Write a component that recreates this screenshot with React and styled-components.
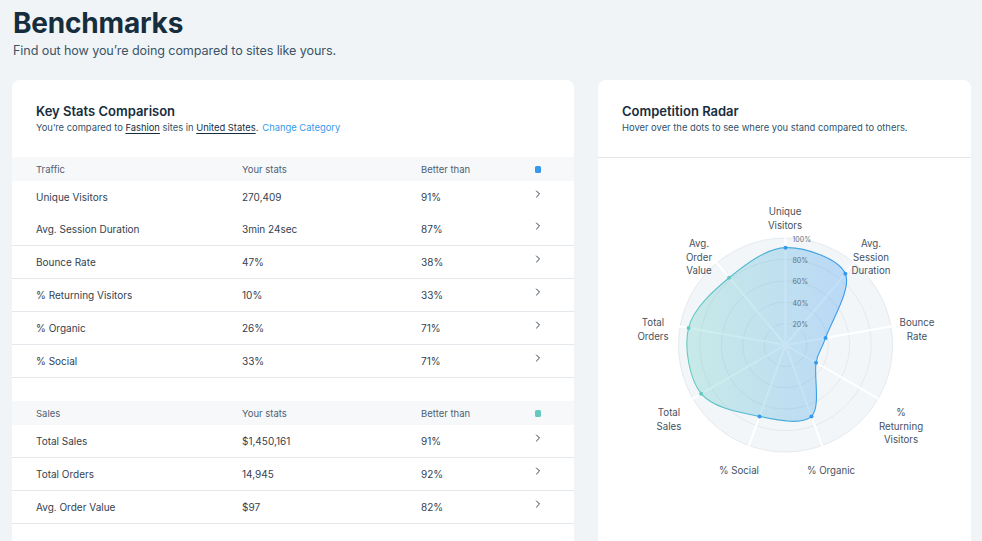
import React from 'react';
import styled, { createGlobalStyle } from 'styled-components';

const GlobalStyle = createGlobalStyle`
  html, body {
    margin: 0;
    padding: 0;
    background: #f0f4f7;
    overflow: hidden;
  }
  * {
    box-sizing: border-box;
  }
  body {
    font-family: Inter, "Noto Sans", sans-serif;
    color: #162d3d;
  }
`;

const TRAFFIC = '#3899ec';
const SALES = '#63c9c1';

const traffic = [
  { name: 'Unique Visitors', stat: '270,409', better: 91 },
  { name: 'Avg. Session Duration', stat: '3min 24sec', better: 87 },
  { name: 'Bounce Rate', stat: '47%', better: 38 },
  { name: '% Returning Visitors', stat: '10%', better: 33 },
  { name: '% Organic', stat: '26%', better: 71 },
  { name: '% Social', stat: '33%', better: 71 },
];

const sales = [
  { name: 'Total Sales', stat: '$1,450,161', better: 91 },
  { name: 'Total Orders', stat: '14,945', better: 92 },
  { name: 'Avg. Order Value', stat: '$97', better: 82 },
];

// label anchors measured around the radar (svg coordinates)
const radarAxes = [
  { label: ['Unique', 'Visitors'], v: 91, kind: 'traffic', x: 187, y: 53 },
  { label: ['Avg.', 'Session', 'Duration'], v: 87, kind: 'traffic', x: 273, y: 85 },
  { label: ['Bounce', 'Rate'], v: 38, kind: 'traffic', x: 319, y: 164 },
  { label: ['%', 'Returning', 'Visitors'], v: 33, kind: 'traffic', x: 303, y: 254 },
  { label: ['% Organic'], v: 71, kind: 'traffic', x: 233, y: 312 },
  { label: ['% Social'], v: 71, kind: 'traffic', x: 141, y: 312 },
  { label: ['Total', 'Sales'], v: 91, kind: 'sales', x: 71, y: 254 },
  { label: ['Total', 'Orders'], v: 92, kind: 'sales', x: 55, y: 164 },
  { label: ['Avg.', 'Order', 'Value'], v: 82, kind: 'sales', x: 101, y: 85 },
];

const Page = styled.div`
  padding: 6px 11px 0 12px;
  height: 541px;
`;

const Title = styled.h1`
  margin: 0 0 0 1px;
  font-size: 28px;
  line-height: 34px;
  font-weight: 700;
  color: #162d3d;
  letter-spacing: -0.2px;
`;

const Subtitle = styled.p`
  margin: 2px 0 0 1px;
  font-size: 12.6px;
  line-height: 18px;
  color: #3b5568;
  letter-spacing: -0.1px;
`;

const Columns = styled.div`
  display: grid;
  grid-template-columns: 562px 373px;
  gap: 24px;
  margin-top: 20px;
  align-items: start;
`;

const Card = styled.section`
  background: #fff;
  border-radius: 8px 8px 0 0;
  min-height: 480px;
  overflow: hidden;
`;

const CardHeader = styled.header`
  padding: 22px 24px 22px;
  border-bottom: ${(p) => (p.$divider ? '1px solid #e1e5ea' : 'none')};
`;

const CardTitle = styled.h2`
  margin: 0;
  font-size: 13px;
  line-height: 18px;
  font-weight: 600;
  color: #162d3d;
`;

const CardText = styled.p`
  margin: 1px 0 0;
  font-size: 9.4px;
  line-height: 14px;
  color: #32536a;
`;

const Underlined = styled.span`
  text-decoration: underline;
  text-underline-offset: 2px;
  color: #162d3d;
`;

const Link = styled.a`
  color: #3899ec;
  margin-left: 4px;
  text-decoration: none;
`;

const Table = styled.div`
  display: flex;
  flex-direction: column;
  margin-bottom: ${(p) => p.$gap || 0}px;
`;

const Grid = styled.div`
  display: grid;
  grid-template-columns: 206px 179px 1fr 12px;
  align-items: center;
  padding: 0 30px 0 24px;
`;

const HeadRow = styled(Grid)`
  height: 24px;
  background: #f7f8fa;
  font-size: 9.5px;
  color: #4d6272;
`;

const Row = styled(Grid)`
  height: ${(p) => (p.$first ? 32 : 33)}px;
  border-bottom: ${(p) => (p.$first ? 'none' : '1px solid #e4e7ec')};
  font-size: 10px;
  color: #34424f;
`;

const Swatch = styled.span`
  width: 6px;
  height: 7px;
  border-radius: 1.5px;
  background: ${(p) => p.$color};
  justify-self: center;
`;

const Chevron = styled.svg`
  width: 6px;
  height: 8px;
  justify-self: center;
  margin-top: -6px;
`;

const ChartWrap = styled.div`
  display: flex;
  justify-content: center;
`;

const StatsTable = ({ title, color, rows, gap }) => (
  <Table $gap={gap}>
    <HeadRow>
      <span>{title}</span>
      <span>Your stats</span>
      <span>Better than</span>
      <Swatch $color={color} />
    </HeadRow>
    {rows.map((r, i) => (
      <Row key={r.name} $first={title === 'Traffic' && i === 0}>
        <span>{r.name}</span>
        <span>{r.stat}</span>
        <span>{r.better}%</span>
        <Chevron viewBox="0 0 6 8">
          <path d="M1.5 1 L4.5 4 L1.5 7" fill="none" stroke="#2f3e4c" strokeWidth="1" strokeLinecap="round" strokeLinejoin="round" />
        </Chevron>
      </Row>
    ))}
  </Table>
);

const CX = 187.5;
const CY = 187;
const R = 107;

const point = (i, v) => {
  const a = (i * 40 * Math.PI) / 180;
  return [CX + Math.sin(a) * R * v, CY - Math.cos(a) * R * v];
};

const smoothClosed = (pts) => {
  const n = pts.length;
  let d = `M${pts[0][0].toFixed(2)},${pts[0][1].toFixed(2)}`;
  for (let i = 0; i < n; i++) {
    const p0 = pts[(i - 1 + n) % n];
    const p1 = pts[i];
    const p2 = pts[(i + 1) % n];
    const p3 = pts[(i + 2) % n];
    const c1 = [p1[0] + (p2[0] - p0[0]) / 6, p1[1] + (p2[1] - p0[1]) / 6];
    const c2 = [p2[0] - (p3[0] - p1[0]) / 6, p2[1] - (p3[1] - p1[1]) / 6];
    d += ` C${c1[0].toFixed(2)},${c1[1].toFixed(2)} ${c2[0].toFixed(2)},${c2[1].toFixed(2)} ${p2[0].toFixed(2)},${p2[1].toFixed(2)}`;
  }
  return d + 'Z';
};

const Radar = () => {
  const pts = radarAxes.map((a, i) => point(i, a.v / 100));
  const rings = [0.2, 0.4, 0.6, 0.8, 1];
  return (
    <svg width="373" height="384" viewBox="0 0 373 384">
      <defs>
        <linearGradient id="radarGrad" gradientUnits="userSpaceOnUse" x1={CX - 90} y1="0" x2={CX + 50} y2="0">
          <stop offset="0" stopColor={SALES} />
          <stop offset="1" stopColor={TRAFFIC} />
        </linearGradient>
      </defs>
      <circle cx={CX} cy={CY} r={R} fill="#f3f6f9" stroke="#e6e9ed" strokeWidth="1" />
      {rings.slice(0, 4).map((r) => (
        <circle key={r} cx={CX} cy={CY} r={R * r} fill="none" stroke="#e1e4e8" strokeWidth="0.8" />
      ))}
      {radarAxes.map((a, i) => {
        const [x, y] = point(i, 1.01);
        return <line key={i} x1={CX} y1={CY} x2={x} y2={y} stroke="#fff" strokeWidth="2" />;
      })}
      <path d={smoothClosed(pts)} fill="url(#radarGrad)" fillOpacity="0.3" stroke="url(#radarGrad)" strokeWidth="1.1" />
      {rings.map((r) => (
        <text key={r} x={CX + 7} y={CY - R * r + 1} fontSize="7" fill="#5f7283" fontFamily="Inter, sans-serif" dominantBaseline="central">
          {Math.round(r * 100)}%
        </text>
      ))}
      {pts.map((p, i) => (
        <circle key={i} cx={p[0]} cy={p[1]} r="2" fill={radarAxes[i].kind === 'traffic' ? TRAFFIC : SALES} />
      ))}
      {radarAxes.map((a) => (
        <text key={a.label.join(' ')} x={a.x} y={a.y} textAnchor="middle" fontSize="9.7" fill="#45525f" fontFamily="Inter, sans-serif" dominantBaseline="central">
          {a.label.map((l, j) => (
            <tspan key={l} x={a.x} dy={j === 0 ? 0 : 13.5}>
              {l}
            </tspan>
          ))}
        </text>
      ))}
    </svg>
  );
};

export default function App() {
  return (
    <>
      <GlobalStyle />
      <Page>
        <Title>Benchmarks</Title>
        <Subtitle>Find out how you’re doing compared to sites like yours.</Subtitle>
        <Columns>
          <Card>
            <CardHeader>
              <CardTitle>Key Stats Comparison</CardTitle>
              <CardText>
                You’re compared to <Underlined>Fashion</Underlined> sites in <Underlined>United States</Underlined>.
                <Link href="#">Change Category</Link>
              </CardText>
            </CardHeader>
            <StatsTable title="Traffic" color={TRAFFIC} rows={traffic} gap={23} />
            <StatsTable title="Sales" color={SALES} rows={sales} />
          </Card>
          <Card>
            <CardHeader $divider>
              <CardTitle>Competition Radar</CardTitle>
              <CardText>Hover over the dots to see where you stand compared to others.</CardText>
            </CardHeader>
            <ChartWrap>
              <Radar />
            </ChartWrap>
          </Card>
        </Columns>
      </Page>
    </>
  );
}
